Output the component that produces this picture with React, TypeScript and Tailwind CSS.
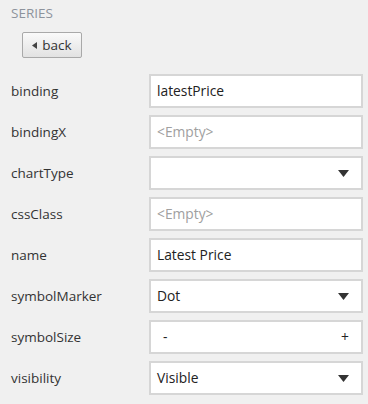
import React from 'react';

type Row = { label: string; kind: 'text' | 'select' | 'stepper'; value?: string };

const rows: Row[] = [
  { label: 'binding', kind: 'text', value: 'latestPrice' },
  { label: 'bindingX', kind: 'text' },
  { label: 'chartType', kind: 'select' },
  { label: 'cssClass', kind: 'text' },
  { label: 'name', kind: 'text', value: 'Latest Price' },
  { label: 'symbolMarker', kind: 'select', value: 'Dot' },
  { label: 'symbolSize', kind: 'stepper' },
  { label: 'visibility', kind: 'select', value: 'Visible' },
];

const Caret = () => (
  <svg width="11" height="7" viewBox="0 0 11 7" className="shrink-0">
    <path d="M0 0 H11 L5.5 7 Z" fill="#333" />
  </svg>
);

const App: React.FC = () => {
  return (
    <div
      className="w-[368px] h-[404px] bg-[#f0f0f0] overflow-hidden"
      style={{ fontFamily: '"Open Sans", "Noto Sans", sans-serif' }}
    >
      <div className="pl-[11px] pt-[4px] text-[13.5px] leading-[18px] text-[#8d939c]">SERIES</div>
      <div className="pl-[22px] pt-[10px]">
        <button className="h-[26px] w-[60px] flex items-center justify-center gap-[5px] rounded-[2px] border border-[#a9a9a9] bg-gradient-to-b from-[#fafafa] to-[#e2e2e2] text-[13.5px] text-[#333]">
          <svg width="5" height="7" viewBox="0 0 5 7">
            <path d="M5 0 V7 L0 3.5 Z" fill="#444" />
          </svg>
          back
        </button>
      </div>
      <div className="flex flex-col gap-[7px] pt-[16px]">
        {rows.map(r => (
          <div key={r.label} className="flex items-center h-[34px]">
            <div className="w-[149px] pl-[11px] text-[13.5px] text-[#333]">{r.label}</div>
            <div className="w-[214px] h-[34px] bg-white border-2 border-[#d6d6d6] flex items-center pl-[6px] pr-[12px] text-[13.8px]">
              {r.kind === 'text' && (
                r.value
                  ? <span className="text-[#222]">{r.value}</span>
                  : <span className="text-[#a0a0a0]">&lt;Empty&gt;</span>
              )}
              {r.kind === 'select' && (
                <>
                  <span className="flex-1 text-[#222]">{r.value ?? ''}</span>
                  <Caret />
                </>
              )}
              {r.kind === 'stepper' && (
                <>
                  <span className="flex-1 pl-[6px] text-[#222]">-</span>
                  <span className="text-[#222] pr-0">+</span>
                </>
              )}
            </div>
          </div>
        ))}
      </div>
    </div>
  );
};

export default App;
